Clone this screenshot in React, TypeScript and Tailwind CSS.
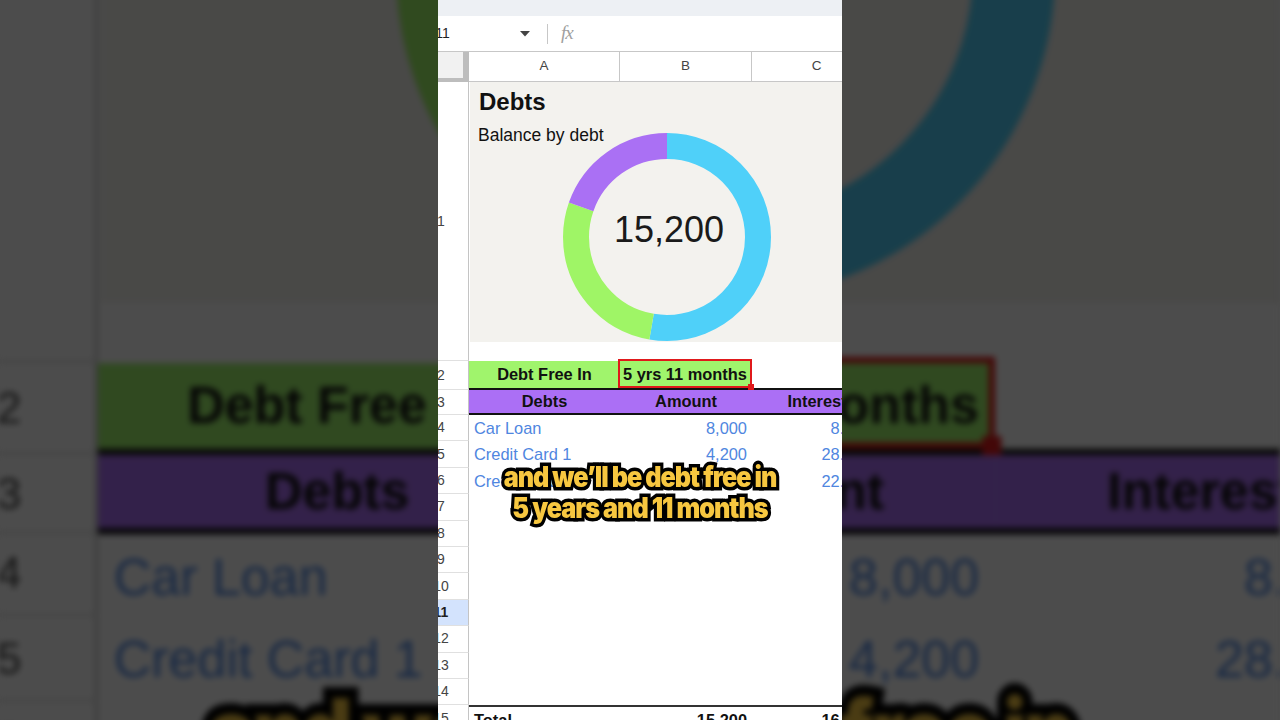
import React from 'react';

const SANS = "font-['Liberation_Sans',Arial,sans-serif]";
const DATA = 'text-[#4f86e0]';

interface Debt {
  name: string;
  amount: string;
  rate: string;
}

const debts: Debt[] = [
  { name: 'Car Loan', amount: '8,000', rate: '8.00%' },
  { name: 'Credit Card 1', amount: '4,200', rate: '28.00%' },
  { name: 'Credit Card 2', amount: '3,000', rate: '22.00%' },
];

const Donut: React.FC = () => {
  const r = 91;
  const c = 2 * Math.PI * r;
  const segs = [
    { v: 8000, color: '#4fd0f9' },
    { v: 4200, color: '#9ff566' },
    { v: 3000, color: '#aa70f4' },
  ];
  let offset = 0;
  return (
    <svg width="208" height="208" viewBox="0 0 208 208" className="[grid-area:1/1]">
      <g transform="rotate(-90 104 104)">
        {segs.map((s, i) => {
          const len = (s.v / 15200) * c;
          const el = (
            <circle
              key={i}
              cx="104"
              cy="104"
              r={r}
              fill="none"
              stroke={s.color}
              strokeWidth="26"
              strokeDasharray={`${len} ${c - len}`}
              strokeDashoffset={-offset}
            />
          );
          offset += len;
          return el;
        })}
      </g>
    </svg>
  );
};

const RowHead: React.FC<{ n: number; active?: boolean }> = ({ n, active }) => (
  <div
    className={`w-[55px] shrink-0 h-full flex items-center justify-center border-r border-b border-r-[#c4c4c4] border-b-[#e0e0e0] text-[14px] ${
      active ? 'bg-[#d3e3fd] text-[#1f1f1f] font-bold' : 'bg-white text-[#444] font-normal'
    }`}
  >
    {n}
  </div>
);

const Frame: React.FC = () => {
  return (
    <div className={`relative w-[404px] h-[720px] shrink-0 bg-white overflow-hidden flex flex-col ${SANS}`}>
      <div className="h-[16px] shrink-0 bg-[#edf0f4]" />

      {/* formula bar */}
      <div className="h-[36px] shrink-0 flex items-center border-b border-[#c7c7c7] text-[14px] text-[#1f1f1f]">
        <span className="-ml-[12px] w-[94px]">A11</span>
        <svg width="10" height="6" viewBox="0 0 10 6" className="mr-[17px]">
          <path d="M0 0 H10 L5 5.5 Z" fill="#444" />
        </svg>
        <div className="w-px h-[20px] bg-[#c7c7c7]" />
        <span className="ml-[13px] font-['Liberation_Serif',serif] italic text-[19px] text-[#a0a0a0] tracking-[-1px]">
          fx
        </span>
      </div>

      <div className="-ml-[24px] shrink-0 flex flex-col">
        {/* column headers */}
        <div className="flex h-[30px]">
          <div className="w-[55px] shrink-0 bg-[#f1f1f1] border-r-[6px] border-b-[4px] border-[#bdbdbd]" />
          {['A', 'B', 'C'].map((l, i) => (
            <div
              key={l}
              className={`${i === 0 ? 'w-[151px]' : i === 1 ? 'w-[132px]' : 'w-[130px]'} shrink-0 flex items-center justify-center border-r border-b border-[#c7c7c7] text-[13.5px] text-[#444]`}
            >
              {l}
            </div>
          ))}
        </div>

        {/* row 1: chart */}
        <div className="flex h-[279px]">
          <RowHead n={1} />
          <div className="w-[413px] shrink-0 flex flex-col">
            <div className="h-[260px] bg-[#f3f2ee] ml-px flex flex-col">
              <div className="pl-[9px] pt-[6px] text-[24px] leading-[28px] font-bold text-[#111]">Debts</div>
              <div className="pl-[8px] mt-[9px] text-[17.5px] leading-[20px] text-[#111]">Balance by debt</div>
              <div className="ml-[93px] -mt-[12px] w-[208px] h-[208px] grid">
                <Donut />
                <div className="[grid-area:1/1] place-self-center -mt-[14px] ml-[4px] text-[36px] leading-none text-[#1a1a1a]">
                  15,200
                </div>
              </div>
            </div>
          </div>
        </div>

        {/* row 2 */}
        <div className="flex h-[29px] font-bold text-[16.4px] text-[#111]">
          <RowHead n={2} />
          <div className="w-[151px] shrink-0 bg-[#a0f46c] border-b-2 border-[#111] flex items-center justify-center">
            Debt Free In
          </div>
          <div className="relative w-[132px] shrink-0 bg-[#a0f46c] border-b-2 border-[#111] flex items-center pl-[3px]">
            <span className="relative">5 yrs 11 months</span>
            <div className="absolute -top-[2px] -left-[2px] right-0 bottom-0 border-[2.5px] border-[#e0191b]" />
            <div className="absolute -right-[2px] -bottom-[2px] w-[6px] h-[6px] bg-[#e0191b]" />
          </div>
          <div className="w-[130px] shrink-0 border-b-2 border-[#111]" />
        </div>

        {/* row 3 */}
        <div className="flex h-[25px] font-bold text-[16.4px] text-[#111]">
          <RowHead n={3} />
          <div className="w-[151px] shrink-0 bg-[#ab6ff5] border-b-2 border-[#111] flex items-center justify-center">
            Debts
          </div>
          <div className="w-[132px] shrink-0 bg-[#ab6ff5] border-b-2 border-[#111] flex items-center justify-center">
            Amount
          </div>
          <div className="w-[130px] shrink-0 bg-[#ab6ff5] border-b-2 border-[#111] flex items-center justify-center">
            Interest
          </div>
        </div>

        {/* data rows */}
        {debts.map((d, i) => (
          <div key={d.name} className={`flex h-[26.4px] text-[16.4px] ${DATA}`}>
            <RowHead n={4 + i} />
            <div className="w-[151px] shrink-0 flex items-center pl-[5px]">{d.name}</div>
            <div className="w-[132px] shrink-0 flex items-center justify-end pr-[5px]">{d.amount}</div>
            <div className="w-[130px] shrink-0 flex items-center justify-end pr-[5px]">{d.rate}</div>
          </div>
        ))}

        {[7, 8, 9, 10, 11, 12, 13, 14].map((n) => (
          <div key={n} className="flex h-[26.4px]">
            <RowHead n={n} active={n === 11} />
          </div>
        ))}

        {/* row 15: total */}
        <div className="flex h-[28px] font-bold text-[16.4px] text-[#111]">
          <RowHead n={15} />
          <div className="w-[151px] shrink-0 border-t-2 border-[#333] flex items-center pl-[5px]">Total</div>
          <div className="w-[132px] shrink-0 border-t-2 border-[#333] flex items-center justify-end pr-[5px]">15,200</div>
          <div className="w-[130px] shrink-0 border-t-2 border-[#333] flex items-center justify-end pr-[5px]">16.00%</div>
        </div>
      </div>

      {/* caption */}
      <div className="absolute left-0 right-0 top-[462px] flex flex-col items-center scale-x-[0.9] font-['Inter',sans-serif] font-black text-[28px] leading-[31px] tracking-[-0.04em] text-[#f7c740] [-webkit-text-stroke:7px_#000] [paint-order:stroke_fill] [text-shadow:2px_3px_0_#000]">
        <span>and we’ll be debt free in</span>
        <span>5 years and 11 months</span>
      </div>
    </div>
  );
};

export default function App() {
  return (
    <div className="relative w-full h-[720px] overflow-hidden bg-[#4b4b4b]">
      <div className="absolute inset-0 flex items-center justify-center overflow-hidden">
        <div className="scale-[3.17] brightness-[0.3] blur-[1px]">
          <Frame />
        </div>
      </div>
      <div className="relative flex justify-center">
        <Frame />
      </div>
    </div>
  );
}
